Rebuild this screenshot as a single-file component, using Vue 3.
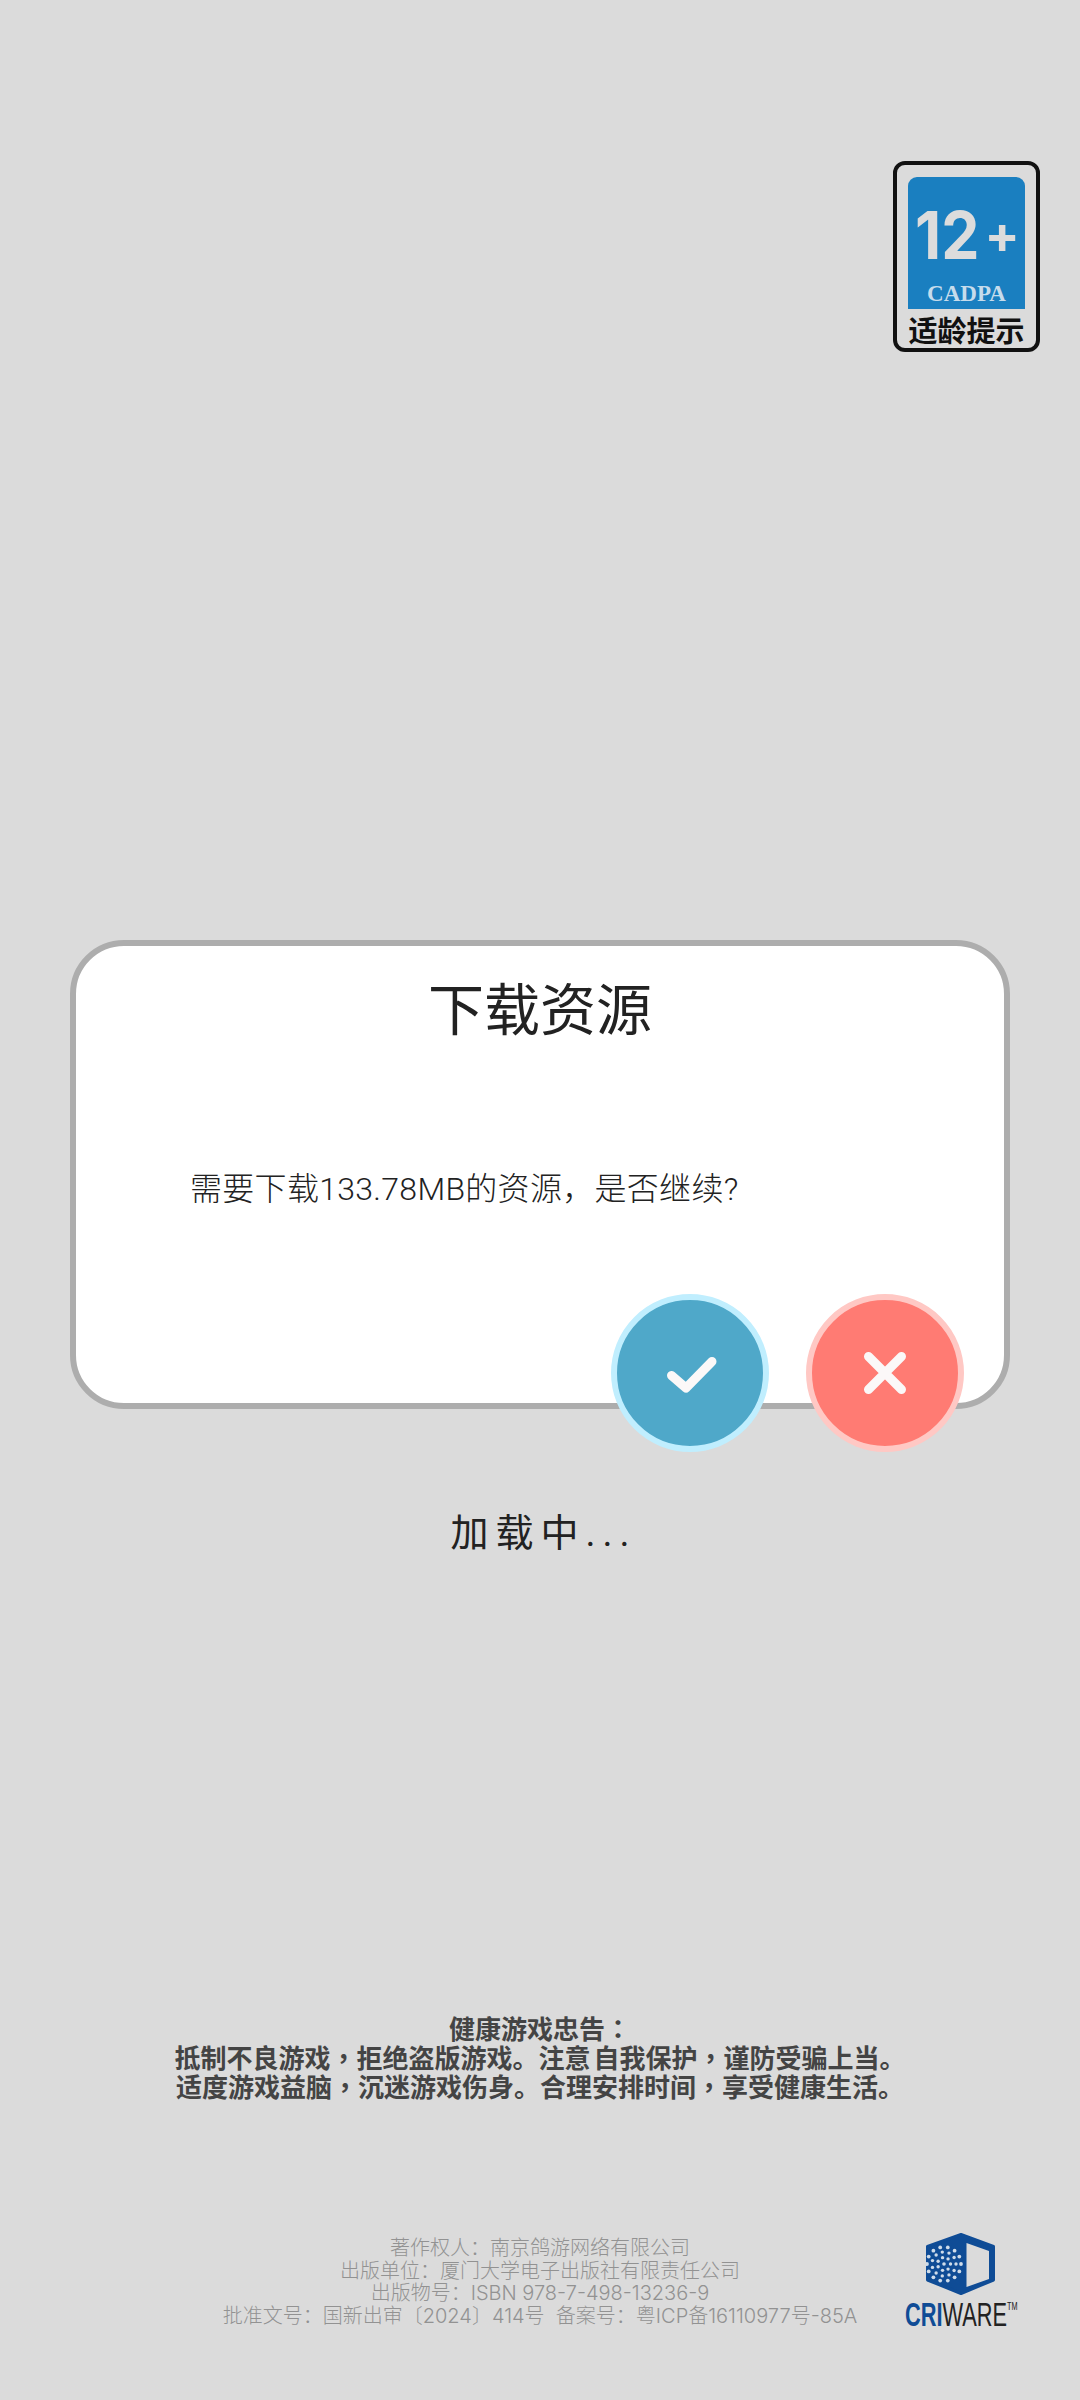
<template>
  <div class="page" lang="zh-CN">
    <!-- 适龄提示 -->
    <div class="age-badge">
      <div class="age-blue">
        <div class="age-num"><span class="num-12">12</span><span class="num-plus">+</span></div>
        <div class="age-cadpa">CADPA</div>
      </div>
      <div class="age-label">适龄提示</div>
    </div>

    <!-- 下载弹窗 -->
    <div class="dialog">
      <h1 class="dialog-title">下载资源</h1>
      <p class="dialog-text">需要下载133.78MB的资源&#xFF0C;是否继续?</p>
      <div class="dialog-actions">
        <button class="round-btn ok" type="button">
          <svg width="64" height="64" viewBox="0 0 64 64">
            <path d="M13.5 34.5 L28 47 L54 20.5" />
          </svg>
        </button>
        <button class="round-btn cancel" type="button">
          <svg width="64" height="64" viewBox="0 0 64 64">
            <path d="M15.5 15.5 L48.5 48.5 M48.5 15.5 L15.5 48.5" />
          </svg>
        </button>
      </div>
    </div>

    <div class="loading">加载中...</div>

    <!-- 健康游戏忠告 -->
    <div class="notice">
      <div>健康游戏忠告<span class="tc" lang="zh-TW">&#xFF1A;</span></div>
      <div>抵制不良游戏<span class="tc" lang="zh-TW">&#xFF0C;</span>拒绝盗版游戏。注意 自我保护<span class="tc" lang="zh-TW">&#xFF0C;</span>谨防受骗上当。</div>
      <div>适度游戏益脑<span class="tc" lang="zh-TW">&#xFF0C;</span>沉迷游戏伤身。合理安排时间<span class="tc" lang="zh-TW">&#xFF0C;</span>享受健康生活。</div>
    </div>

    <div class="footer">
      <div></div>
      <div class="copyright">
        <div v-for="line in copyright" :key="line">{{ line }}</div>
      </div>
      <div class="criware">
        <svg class="cube" width="69" height="62" viewBox="0 0 69 62">
          <path class="cube-body" d="M35 1.5 L67.5 13.5 V47 L35 60.5 L1.5 47 V13.5 Z" />
          <path class="cube-panel" d="M40.5 10 L63 18 V46 L40.5 54 Z" />
          <circle v-for="(d, i) in dots" :key="i" class="dot" :cx="d.x" :cy="d.y" :r="d.r" />
        </svg>
        <div class="cri-word"><b>CRI</b>WARE<sup>TM</sup></div>
      </div>
    </div>
  </div>
</template>

<script setup>
const copyright = [
  '著作权人\uFF1A南京鸽游网络有限公司',
  '出版单位\uFF1A厦门大学电子出版社有限责任公司',
  '出版物号\uFF1AISBN 978-7-498-13236-9',
  '批准文号\uFF1A国新出审〔2024〕414号  备案号\uFF1A粤ICP备16110977号-85A',
]

// 立方体左侧的圆点图案
const rings = [
  { radius: 0, count: 1, size: 1.8 },
  { radius: 6.5, count: 7, size: 1.7 },
  { radius: 12, count: 11, size: 1.7 },
  { radius: 17, count: 14, size: 1.9 },
]
const dots = rings.flatMap((ring) =>
  Array.from({ length: ring.count }, (_, i) => {
    const angle = (i / ring.count) * Math.PI * 2
    return {
      x: 18 + ring.radius * Math.cos(angle),
      y: 31 + ring.radius * Math.sin(angle),
      r: ring.size,
    }
  })
)
</script>

<style>
html,
body {
  background: #dbdbdb;
}
</style>

<style scoped>
.page {
  width: 1080px;
  height: 2400px;
  display: flex;
  flex-direction: column;
  background: #dbdbdb;
  font-family: "Roboto", "Noto Sans CJK SC", sans-serif;
  overflow: hidden;
}

.age-badge {
  align-self: flex-end;
  box-sizing: border-box;
  width: 147px;
  height: 191px;
  margin: 161px 40px 0 0;
  padding: 12px 11px 0;
  border: 4px solid #111;
  border-radius: 12px;
}

.age-blue {
  height: 132px;
  background: #1a7fc0;
  border-radius: 9px 9px 0 0;
  display: flex;
  flex-direction: column;
  align-items: center;
  color: #dcdcdc;
}

.age-num {
  display: flex;
  align-items: center;
  height: 50px;
  margin-top: 33px;
  width: 104px;
  font-family: "Inter", sans-serif;
  font-weight: 700;
}

.num-12 {
  font-size: 66px;
  line-height: 50px;
  width: 72px;
  transform: scaleX(0.92);
  transform-origin: left center;
}

.num-plus {
  font-size: 52px;
  line-height: 50px;
}

.age-cadpa {
  margin-top: 21px;
  font-family: "Liberation Serif", serif;
  font-weight: 700;
  font-size: 23px;
  line-height: 26px;
  color: #c6dcec;
}

.age-label {
  margin: 4px -5px 0;
  text-align: center;
  font-family: "Noto Sans CJK SC", sans-serif;
  font-weight: 700;
  font-size: 29px;
  line-height: 32px;
  color: #111;
  white-space: nowrap;
}

.dialog {
  position: relative;
  box-sizing: border-box;
  width: 940px;
  height: 469px;
  margin: 588px 0 0 70px;
  border: 6px solid #adadad;
  border-radius: 54px;
  background: #fff;
}

.dialog-title {
  margin: 25px 0 0;
  text-align: center;
  font-size: 56px;
  line-height: 80px;
  font-weight: 400;
  color: #222;
}

.dialog-text {
  margin: 115px 0 0 114px;
  font-size: 32px;
  line-height: 46px;
  font-weight: 300;
  letter-spacing: 0.3px;
  color: #222;
}

.dialog-actions {
  position: absolute;
  top: 348px;
  left: 535px;
  display: flex;
  gap: 37px;
}

.round-btn {
  box-sizing: border-box;
  width: 158px;
  height: 158px;
  padding: 0;
  border-radius: 50%;
  border: 6px solid;
  display: flex;
  align-items: center;
  justify-content: center;
}

.round-btn.ok {
  background: #4fa8c9;
  border-color: #c0eefe;
}

.round-btn.cancel {
  background: #ff7b73;
  border-color: #ffc8c4;
}

.round-btn path {
  fill: none;
  stroke: #fbf8f8;
  stroke-width: 9;
  stroke-linecap: round;
  stroke-linejoin: round;
}

.loading {
  margin-top: 97px;
  padding-left: 7px;
  text-align: center;
  font-size: 38px;
  line-height: 54px;
  letter-spacing: 7px;
  color: #222;
}

.notice {
  margin-top: 453px;
  text-align: center;
  font-family: "Noto Sans CJK SC", sans-serif;
  font-weight: 700;
  font-size: 26px;
  line-height: 29px;
  word-spacing: -3px;
  color: #444;
}

.tc {
  font-family: "Noto Sans CJK TC", sans-serif;
}

.footer {
  margin-top: 137px;
  display: grid;
  grid-template-columns: 1fr auto 1fr;
}

.copyright {
  text-align: center;
  font-family: "Inter", "Noto Sans CJK SC", sans-serif;
  font-size: 20px;
  line-height: 22.5px;
  font-weight: 300;
  color: #929292;
  white-space: pre;
}

.criware {
  position: relative;
  width: 130px;
  margin-left: 45px;
}

.cube {
  display: block;
  margin: -4px 0 0 24px;
}

.cube-body {
  fill: #0f4c96;
  stroke: #0f4c96;
  stroke-width: 3;
  stroke-linejoin: round;
}

.cube-panel {
  fill: #dbdbdb;
}

.dot {
  fill: #cfdcea;
}

.cri-word {
  margin: 5px 0 0 3px;
  font-family: "Liberation Sans", sans-serif;
  font-size: 33px;
  line-height: 30px;
  color: #222;
  white-space: nowrap;
  transform: scaleX(0.66);
  transform-origin: left center;
}

.cri-word b {
  color: #0f4c96;
}

.cri-word sup {
  font-size: 11px;
  line-height: 0;
  vertical-align: 16px;
}
</style>
